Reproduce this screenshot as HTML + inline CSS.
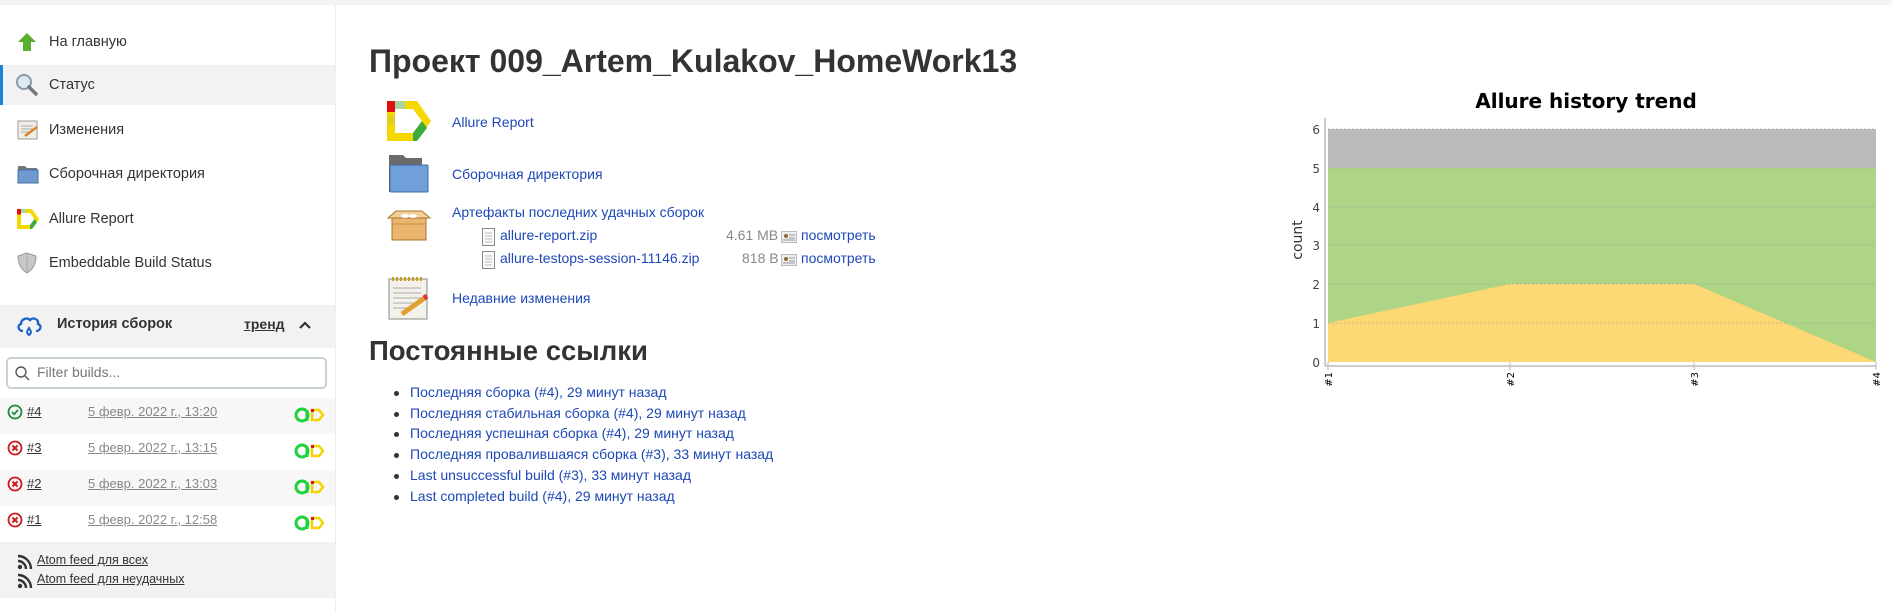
<!DOCTYPE html>
<html><head><meta charset="utf-8"><style>
*{margin:0;padding:0;box-sizing:border-box}
body{width:1892px;height:613px;background:#fff;font-family:"Liberation Sans","Noto Sans CJK SC",sans-serif;color:#333;position:relative;overflow:hidden;font-size:14px}
.abs{position:absolute}
a{color:#1d48b5;text-decoration:none}
.topbar{left:0;top:0;width:1892px;height:5px;background:#f4f4f4}
.side{left:0;top:5px;width:336px;height:608px;border-right:1px solid #eee}
.it{position:absolute;left:0;width:335px;height:40px;display:flex;align-items:center;font-size:14.5px;color:#333}
.it svg{position:absolute;left:17px}
.it span{position:absolute;left:49px}
.hist{left:0;top:305px;width:335px;height:43px;background:#f2f2f2}
.row{position:absolute;left:0;width:335px;height:36px;font-size:13px}
.row .n{position:absolute;left:27px;top:6px;color:#333;text-decoration:underline}
.row .d{position:absolute;left:88px;top:6px;color:#888;text-decoration:underline}
.row svg.s{position:absolute;left:7px;top:6px}
.row svg.a{position:absolute;left:294px;top:9px}
.lnk{font-size:14px}
li{list-style:none;position:absolute;left:394px;font-size:14px}
li:before{content:"";position:absolute;left:0;top:7px;width:5px;height:5px;border-radius:50%;background:#333}
li a{position:absolute;left:16px;white-space:nowrap}
</style></head><body>
<div class="abs topbar"></div>
<div class="abs side"></div>

<div class="it" style="top:22px"><svg width="20" height="20" viewBox="0 0 20 20"><path d="M10 1 L19 10 L14 10 L14 19 L6 19 L6 10 L1 10Z" fill="#5aad2f"/></svg><span>На главную</span></div>
<div class="it" style="top:65px;background:#f2f2f2;box-shadow:inset 3px 0 0 #1b82d4"><svg width="24" height="24" viewBox="0 0 24 24" style="left:15px"><circle cx="9" cy="9" r="7" fill="#dfe9f5" stroke="#8a9bb0" stroke-width="2"/><path d="M14 14 L21 21" stroke="#777" stroke-width="3.5" stroke-linecap="round"/></svg><span>Статус</span></div>
<div class="it" style="top:110px"><svg width="22" height="22" viewBox="0 0 22 22"><rect x="1" y="2" width="19" height="18" fill="#f2efe6" stroke="#999"/><path d="M4 7h12M4 10h12M4 13h8" stroke="#aaa"/><path d="M8 17 L20 8" stroke="#d8862a" stroke-width="2.5"/></svg><span>Изменения</span></div>
<div class="it" style="top:154px"><svg width="22" height="20" viewBox="0 0 22 20"><path d="M1 2h7l2 2h10v14H1z" fill="#777"/><rect x="1" y="6" width="20" height="13" fill="#6f9ad1" stroke="#4a6fa0"/></svg><span>Сборочная директория</span></div>
<div class="it" style="top:199px"><svg width="22" height="20" viewBox="0 0 44 40"><path fill-rule="evenodd" d="M0 0H30L44 20L30 40H0Z M8 8V32H26L35 20L26 8Z" fill="#f5d800"/><rect x="0" y="0" width="8" height="11" fill="#e01010"/><rect x="8" y="0" width="10" height="8" fill="#a8d4a0"/><path d="M26 32L35 20L40 27L30 40H26Z" fill="#3cab3c"/></svg><span>Allure Report</span></div>
<div class="it" style="top:243px"><svg width="20" height="22" viewBox="0 0 20 22"><path d="M10 1 L19 4 C19 13 15 18 10 21 C5 18 1 13 1 4Z" fill="#c8c8c8" stroke="#999"/><path d="M10 2v18" stroke="#aaa"/></svg><span>Embeddable Build Status</span></div>

<div class="abs hist"></div>
<svg class="abs" style="left:16px;top:314px" width="26" height="24" viewBox="0 0 26 24"><path d="M7 17 C2 17 1 11 5 10 C5 5 11 3 14 6 C17 3 23 5 22 10 C26 11 25 17 20 17" fill="none" stroke="#1b63c6" stroke-width="2.3"/><path d="M13 14 C11 17 10 19 13 21 C16 19 15 17 13 14Z" fill="none" stroke="#1b63c6" stroke-width="2"/></svg>
<div class="abs" style="left:57px;top:316px;font-weight:bold;font-size:14.5px;color:#333">История сборок</div>
<div class="abs" style="left:244px;top:316px;font-weight:bold;font-size:14px;color:#333;text-decoration:underline">тренд</div>
<svg class="abs" style="left:298px;top:320px" width="14" height="10" viewBox="0 0 14 10"><path d="M2 8 L7 3 L12 8" fill="none" stroke="#333" stroke-width="2.2"/></svg>
<div class="abs" style="left:6px;top:357px;width:321px;height:32px;border:2px solid #c9d2d6;border-radius:5px;background:#fff"></div>
<svg class="abs" style="left:14px;top:365px" width="16" height="16" viewBox="0 0 16 16"><circle cx="7" cy="7" r="5" fill="none" stroke="#555" stroke-width="1.4"/><path d="M11 11l4 4" stroke="#555" stroke-width="1.4"/></svg>
<div class="abs" style="left:37px;top:364px;font-size:14px;color:#777">Filter builds...</div>

<div class="row" style="top:398px;background:#f7f7f7"><svg class="s" width="16" height="16" viewBox="0 0 16 16"><circle cx="8" cy="8" r="6.5" fill="none" stroke="#1e8a3c" stroke-width="1.8"/><path d="M5 8l2.2 2.2L11 6" fill="none" stroke="#1e8a3c" stroke-width="1.8"/></svg><span class="n">#4</span><span class="d">5 февр. 2022 г., 13:20</span><svg class="a" width="32" height="16" viewBox="0 0 32 16"><circle cx="8" cy="8" r="6" fill="none" stroke="#1ed23e" stroke-width="3"/><path d="M13 3v11" stroke="#1ed23e" stroke-width="3"/><path d="M18 3h7l4 5-4 5h-7z" fill="none" stroke="#f2d400" stroke-width="2.5"/><rect x="17" y="2" width="3" height="3" fill="#e01010"/></svg></div>
<div class="row" style="top:434px"><svg class="s" width="16" height="16" viewBox="0 0 16 16"><circle cx="8" cy="8" r="6.5" fill="none" stroke="#d01818" stroke-width="1.8"/><path d="M5.5 5.5l5 5M10.5 5.5l-5 5" stroke="#d01818" stroke-width="2"/></svg><span class="n">#3</span><span class="d">5 февр. 2022 г., 13:15</span><svg class="a" width="32" height="16" viewBox="0 0 32 16"><circle cx="8" cy="8" r="6" fill="none" stroke="#1ed23e" stroke-width="3"/><path d="M13 3v11" stroke="#1ed23e" stroke-width="3"/><path d="M18 3h7l4 5-4 5h-7z" fill="none" stroke="#f2d400" stroke-width="2.5"/><rect x="17" y="2" width="3" height="3" fill="#e01010"/></svg></div>
<div class="row" style="top:470px;background:#f7f7f7"><svg class="s" width="16" height="16" viewBox="0 0 16 16"><circle cx="8" cy="8" r="6.5" fill="none" stroke="#d01818" stroke-width="1.8"/><path d="M5.5 5.5l5 5M10.5 5.5l-5 5" stroke="#d01818" stroke-width="2"/></svg><span class="n">#2</span><span class="d">5 февр. 2022 г., 13:03</span><svg class="a" width="32" height="16" viewBox="0 0 32 16"><circle cx="8" cy="8" r="6" fill="none" stroke="#1ed23e" stroke-width="3"/><path d="M13 3v11" stroke="#1ed23e" stroke-width="3"/><path d="M18 3h7l4 5-4 5h-7z" fill="none" stroke="#f2d400" stroke-width="2.5"/><rect x="17" y="2" width="3" height="3" fill="#e01010"/></svg></div>
<div class="row" style="top:506px"><svg class="s" width="16" height="16" viewBox="0 0 16 16"><circle cx="8" cy="8" r="6.5" fill="none" stroke="#d01818" stroke-width="1.8"/><path d="M5.5 5.5l5 5M10.5 5.5l-5 5" stroke="#d01818" stroke-width="2"/></svg><span class="n">#1</span><span class="d">5 февр. 2022 г., 12:58</span><svg class="a" width="32" height="16" viewBox="0 0 32 16"><circle cx="8" cy="8" r="6" fill="none" stroke="#1ed23e" stroke-width="3"/><path d="M13 3v11" stroke="#1ed23e" stroke-width="3"/><path d="M18 3h7l4 5-4 5h-7z" fill="none" stroke="#f2d400" stroke-width="2.5"/><rect x="17" y="2" width="3" height="3" fill="#e01010"/></svg></div>
<div class="abs" style="left:0;top:542px;width:335px;height:56px;background:#f2f2f2"></div>
<svg class="abs" style="left:17px;top:554px" width="16" height="16" viewBox="0 0 16 16"><circle cx="3" cy="13" r="2.2" fill="#333"/><path d="M1 7a8 8 0 0 1 8 8M1 2a13 13 0 0 1 13 13" fill="none" stroke="#333" stroke-width="2.4"/></svg>
<svg class="abs" style="left:17px;top:573px" width="16" height="16" viewBox="0 0 16 16"><circle cx="3" cy="13" r="2.2" fill="#333"/><path d="M1 7a8 8 0 0 1 8 8M1 2a13 13 0 0 1 13 13" fill="none" stroke="#333" stroke-width="2.4"/></svg>
<div class="abs" style="left:37px;top:553px;font-size:12.5px;color:#333;text-decoration:underline">Atom feed для всех</div>
<div class="abs" style="left:37px;top:572px;font-size:12.5px;color:#333;text-decoration:underline">Atom feed для неудачных</div>

<div class="abs" style="left:369px;top:43px;font-size:32px;font-weight:bold;color:#333;white-space:nowrap">Проект 009_Artem_Kulakov_HomeWork13</div>

<svg class="abs" style="left:387px;top:101px" width="44" height="40" viewBox="0 0 44 40"><path fill-rule="evenodd" d="M0 0H30L44 20L30 40H0Z M8 8V32H26L35 20L26 8Z" fill="#f5d800"/><rect x="0" y="0" width="8" height="11" fill="#e01010"/><rect x="8" y="0" width="10" height="8" fill="#a8d4a0"/><rect x="0" y="14" width="8" height="10" fill="#e2cf20"/><path d="M26 32L35 20L40 27L30 40H26Z" fill="#3cab3c"/></svg>
<a class="abs lnk" style="left:452px;top:114px">Allure Report</a>
<svg class="abs" style="left:388px;top:154px" width="42" height="40" viewBox="0 0 42 40"><path d="M1 1h14l3 3h16v34H1z" fill="#6a6a6a"/><rect x="2" y="11" width="38" height="27" rx="1" fill="#6fa0db" stroke="#3f6ca6"/></svg>
<a class="abs lnk" style="left:452px;top:166px">Сборочная директория</a>
<svg class="abs" style="left:386px;top:208px" width="46" height="34" viewBox="0 0 46 34"><path d="M6 10h34v22H6z" fill="#e9b56f" stroke="#a8742c"/><path d="M2 10l8-7h26l8 7z" fill="#f1cf96" stroke="#a8742c"/><ellipse cx="19" cy="8" rx="4" ry="2" fill="#fff"/><ellipse cx="27" cy="8" rx="4" ry="2" fill="#fff"/><path d="M6 16h34" stroke="#c98e40"/></svg>
<a class="abs lnk" style="left:452px;top:204px">Артефакты последних удачных сборок</a>
<svg class="abs" style="left:482px;top:228px" width="13" height="18" viewBox="0 0 13 18"><rect x="0.5" y="0.5" width="12" height="17" fill="#fafafa" stroke="#888"/><path d="M3 5h7M3 8h7M3 11h7M3 14h7" stroke="#bbb"/></svg>
<a class="abs" style="left:500px;top:227px;font-size:14px">allure-report.zip</a>
<span class="abs" style="left:726px;top:227px;font-size:14px;color:#888">4.61 MB</span>
<svg class="abs" style="left:781px;top:230px" width="16" height="14" viewBox="0 0 16 14"><rect x="0.5" y="1.5" width="15" height="11" fill="#eee" stroke="#bbb"/><circle cx="5" cy="6" r="2" fill="#8a6a30"/><path d="M8 5h6M8 8h6M2 10h12" stroke="#999"/></svg>
<a class="abs" style="left:801px;top:227px;font-size:14px">посмотреть</a>
<svg class="abs" style="left:482px;top:251px" width="13" height="18" viewBox="0 0 13 18"><rect x="0.5" y="0.5" width="12" height="17" fill="#fafafa" stroke="#888"/><path d="M3 5h7M3 8h7M3 11h7M3 14h7" stroke="#bbb"/></svg>
<a class="abs" style="left:500px;top:250px;font-size:14px">allure-testops-session-11146.zip</a>
<span class="abs" style="left:742px;top:250px;font-size:14px;color:#888">818 B</span>
<svg class="abs" style="left:781px;top:253px" width="16" height="14" viewBox="0 0 16 14"><rect x="0.5" y="1.5" width="15" height="11" fill="#eee" stroke="#bbb"/><circle cx="5" cy="6" r="2" fill="#8a6a30"/><path d="M8 5h6M8 8h6M2 10h12" stroke="#999"/></svg>
<a class="abs" style="left:801px;top:250px;font-size:14px">посмотреть</a>
<svg class="abs" style="left:388px;top:276px" width="42" height="44" viewBox="0 0 42 44"><rect x="1" y="3" width="38" height="40" fill="#f4f1ea" stroke="#888"/><path d="M4 3h32" stroke="#c8a020" stroke-width="4" stroke-dasharray="2 2"/><path d="M5 12h28M5 17h28M5 22h28M5 27h20M5 32h14" stroke="#aaa"/><path d="M14 38 L38 21" stroke="#e0a030" stroke-width="5"/><path d="M36 22l3-2" stroke="#e03030" stroke-width="5"/></svg>
<a class="abs lnk" style="left:452px;top:290px">Недавние изменения</a>

<div class="abs" style="left:369px;top:335px;font-size:27.5px;font-weight:bold;color:#333">Постоянные ссылки</div>
<ul>
<li style="top:384px"><a>Последняя сборка (#4), 29 минут назад</a></li>
<li style="top:405px"><a>Последняя стабильная сборка (#4), 29 минут назад</a></li>
<li style="top:425px"><a>Последняя успешная сборка (#4), 29 минут назад</a></li>
<li style="top:446px"><a>Последняя провалившаяся сборка (#3), 33 минут назад</a></li>
<li style="top:467px"><a>Last unsuccessful build (#3), 33 минут назад</a></li>
<li style="top:488px"><a>Last completed build (#4), 29 минут назад</a></li>
</ul>

<svg class="abs" style="left:1270px;top:80px" width="622" height="320" viewBox="1270 80 622 320" font-family="DejaVu Sans, sans-serif">
<text x="1586" y="108" text-anchor="middle" font-size="20" font-weight="bold" fill="#000">Allure history trend</text>
<rect x="1328" y="129" width="548" height="233" fill="#bababa"/>
<polygon points="1328,168 1876,168 1876,362 1328,362" fill="#aed586"/>
<polygon points="1328,323 1510,284 1694,284 1876,362 1328,362" fill="#fed874"/>
<g stroke="#999" stroke-dasharray="2 2" stroke-width="0.8" opacity="0.7">
<line x1="1328" y1="129" x2="1876" y2="129"/><line x1="1328" y1="168" x2="1876" y2="168"/><line x1="1328" y1="207" x2="1876" y2="207"/><line x1="1328" y1="245" x2="1876" y2="245"/><line x1="1328" y1="284" x2="1876" y2="284"/><line x1="1328" y1="323" x2="1876" y2="323"/></g>
<line x1="1325" y1="118" x2="1325" y2="366" stroke="#bbb" stroke-width="1.5"/>
<line x1="1325" y1="366" x2="1876" y2="366" stroke="#bbb" stroke-width="1.5"/>
<g stroke="#bbb"><line x1="1328" y1="362" x2="1328" y2="370"/><line x1="1510" y1="362" x2="1510" y2="370"/><line x1="1694" y1="362" x2="1694" y2="370"/><line x1="1876" y1="362" x2="1876" y2="370"/></g>
<g font-size="12" fill="#444" text-anchor="end">
<text x="1320" y="134">6</text><text x="1320" y="173">5</text><text x="1320" y="212">4</text><text x="1320" y="250">3</text><text x="1320" y="289">2</text><text x="1320" y="328">1</text><text x="1320" y="367">0</text></g>
<text transform="translate(1302,240) rotate(-90)" text-anchor="middle" font-size="14" fill="#333">count</text>
<g font-size="10" fill="#000" text-anchor="end">
<text transform="translate(1332,372) rotate(-90)">#1</text><text transform="translate(1514,372) rotate(-90)">#2</text><text transform="translate(1698,372) rotate(-90)">#3</text><text transform="translate(1880,372) rotate(-90)">#4</text></g>
</svg>
</body></html>
